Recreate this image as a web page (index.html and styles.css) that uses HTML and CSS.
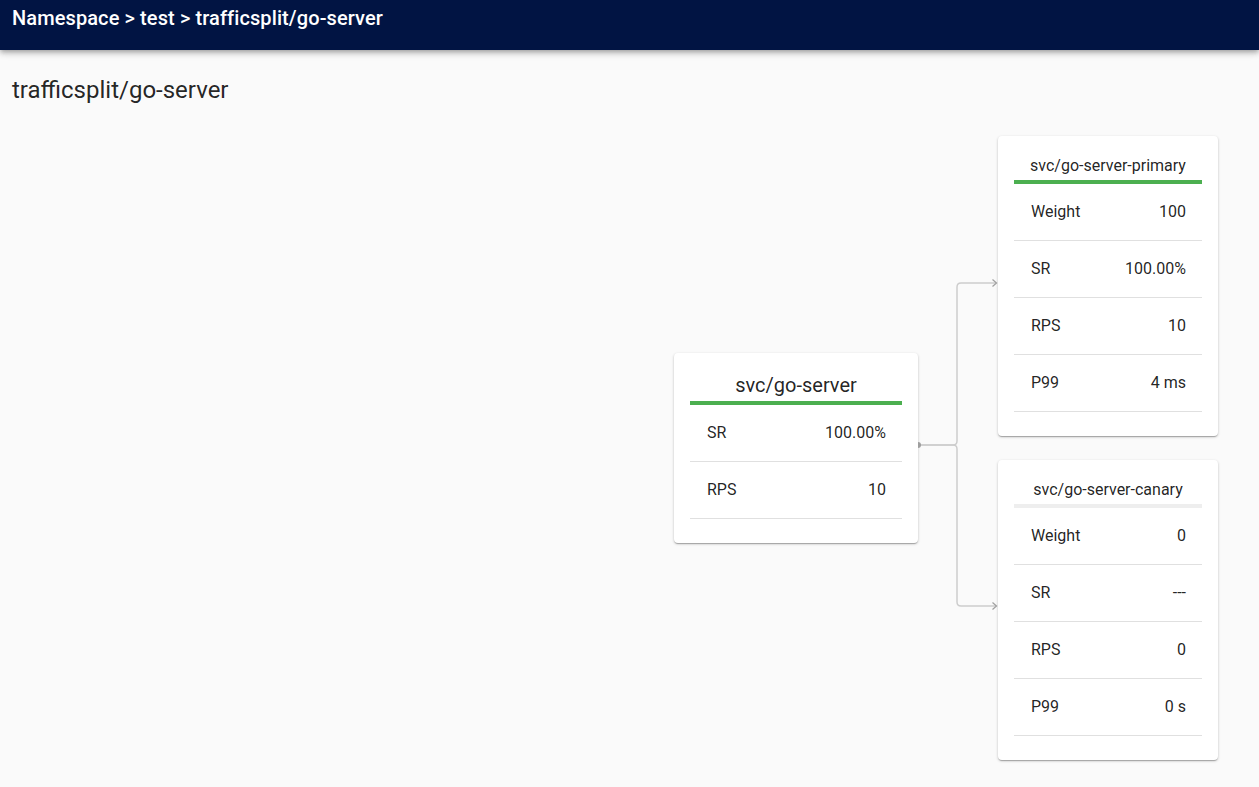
FILE: index.html
```html
<!DOCTYPE html>
<html lang="en">
<head>
<meta charset="utf-8">
<title>trafficsplit/go-server</title>
<link rel="stylesheet" href="styles.css">
</head>
<body>
<header class="appbar">
  <div class="crumbs">Namespace &gt; test &gt; trafficsplit/go-server</div>
</header>
<main class="content">
  <h1 class="page-title">trafficsplit/go-server</h1>
  <div class="graph">
    <section class="card card-main">
      <div class="card-title title-lg">svc/go-server</div>
      <div class="bar bar-green"></div>
      <div class="row"><span>SR</span><span>100.00%</span></div>
      <div class="row"><span>RPS</span><span>10</span></div>
    </section>
    <svg class="links" width="80" height="624" viewBox="0 0 80 624">
      <path class="link" d="M0 309 H35 Q39 309 39 305 V151 Q39 147 43 147 H78"/>
      <path class="link" d="M0 309 H35 Q39 309 39 313 V466 Q39 470 43 470 H78"/>
      <path class="arrow" d="M74.5 143.5 L78.5 147 L74.5 150.5"/>
      <path class="arrow" d="M74.5 466.5 L78.5 470 L74.5 473.5"/>
      <circle class="dot" cx="0" cy="309" r="3"/>
    </svg>
    <div class="leaves">
      <section class="card card-leaf">
        <div class="card-title title-sm">svc/go-server-primary</div>
        <div class="bar bar-green"></div>
        <div class="row"><span>Weight</span><span>100</span></div>
        <div class="row"><span>SR</span><span>100.00%</span></div>
        <div class="row"><span>RPS</span><span>10</span></div>
        <div class="row"><span>P99</span><span>4 ms</span></div>
      </section>
      <section class="card card-leaf">
        <div class="card-title title-sm">svc/go-server-canary</div>
        <div class="bar bar-gray"></div>
        <div class="row"><span>Weight</span><span>0</span></div>
        <div class="row"><span>SR</span><span>---</span></div>
        <div class="row"><span>RPS</span><span>0</span></div>
        <div class="row"><span>P99</span><span>0 s</span></div>
      </section>
    </div>
  </div>
</main>
</body>
</html>
```

FILE: styles.css
```css
html, body {
  margin: 0;
  padding: 0;
}
body {
  background: #fafafa;
  font-family: Roboto, "Liberation Sans", Arial, sans-serif;
  color: rgba(0, 0, 0, 0.87);
  height: 787px;
  overflow: hidden;
}
.appbar {
  height: 50px;
  box-sizing: border-box;
  background: #011443;
  color: #fff;
  padding: 2px 12px 0;
  box-shadow: 0 2px 4px -1px rgba(0,0,0,0.2), 0 4px 5px 0 rgba(0,0,0,0.14), 0 1px 10px 0 rgba(0,0,0,0.12);
  position: relative;
  z-index: 1;
}
.crumbs {
  font-size: 20px;
  font-weight: 500;
  line-height: 32px;
  letter-spacing: 0.1px;
}
.content {
  padding: 24px 41px 0 12px;
}
.page-title {
  margin: 0;
  font-size: 24px;
  font-weight: 400;
  line-height: 32px;
  color: rgba(0, 0, 0, 0.87);
}
.graph {
  margin-top: 30px;
  display: flex;
  justify-content: flex-end;
  align-items: center;
}
.links {
  display: block;
  flex: none;
}
.link {
  fill: none;
  stroke: #cdcdcd;
  stroke-width: 1.5;
}
.arrow {
  fill: none;
  stroke: #a0a0a0;
  stroke-width: 1.2;
}
.dot {
  fill: #9e9e9e;
}
.leaves {
  display: flex;
  flex-direction: column;
  gap: 24px;
}
.card {
  background: #fff;
  border-radius: 4px;
  box-shadow: 0 1px 3px 0 rgba(0,0,0,0.2), 0 1px 1px 0 rgba(0,0,0,0.14), 0 2px 1px -1px rgba(0,0,0,0.12);
  padding: 16px 16px 24px;
  box-sizing: border-box;
}
.card-main {
  width: 244px;
}
.card-leaf {
  width: 220px;
}
.card-title {
  text-align: center;
}
.title-lg {
  font-size: 20px;
  line-height: 32px;
}
.title-sm {
  font-size: 16px;
  line-height: 28px;
}
.bar {
  height: 4px;
}
.bar-green {
  background: #4caf50;
}
.bar-gray {
  background: #eeeeee;
}
.row {
  display: flex;
  justify-content: space-between;
  align-items: center;
  box-sizing: border-box;
  height: 57px;
  padding: 0 16px 2px 17px;
  border-bottom: 1px solid #e0e0e0;
  font-size: 16px;
}
```
